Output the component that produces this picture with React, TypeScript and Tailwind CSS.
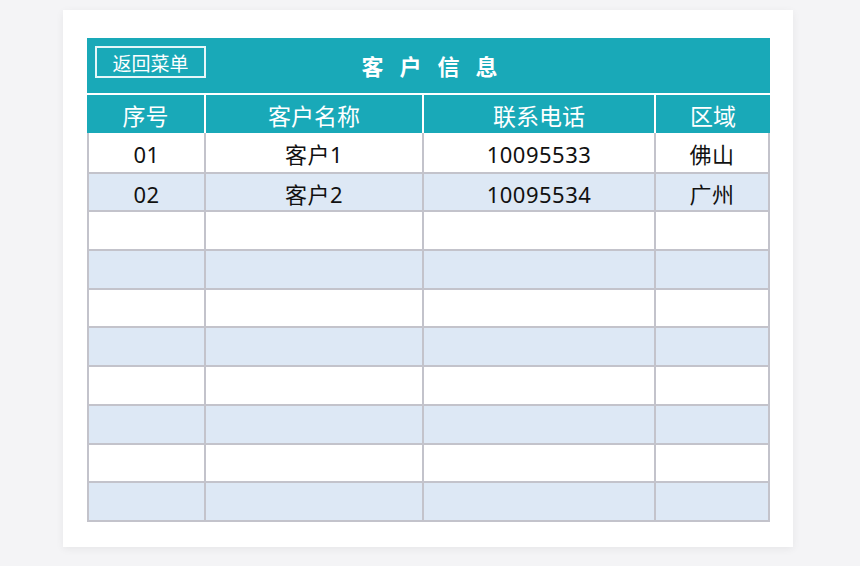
const columns = ['序号', '客户名称', '联系电话', '区域'];

const rows: string[][] = [
  ['01', '客户1', '10095533', '佛山'],
  ['02', '客户2', '10095534', '广州'],
  ['', '', '', ''],
  ['', '', '', ''],
  ['', '', '', ''],
  ['', '', '', ''],
  ['', '', '', ''],
  ['', '', '', ''],
  ['', '', '', ''],
  ['', '', '', ''],
];

const font = { fontFamily: '"Noto Sans", "Noto Sans CJK SC", sans-serif' };

function App() {
  return (
    <div className="h-[566px] w-[860px] bg-[#f4f4f6] pt-[10px] pl-[63px]" style={font}>
      <div className="h-[537px] w-[730px] bg-white pt-[28px] pl-[24px] shadow-[0_2px_8px_rgba(0,0,0,0.06)]">
        <div className="w-[683px]">
          {/* 标题栏 */}
          <div className="relative flex h-[55px] items-center justify-center bg-[#19a9b8]">
            <button className="absolute top-[8px] left-[8px] flex h-[32px] w-[111px] items-center justify-center border-2 border-[#e6f7f9] pt-[4px] text-[19px] leading-none text-white">
              返回菜单
            </button>
            <span className="pt-[2px] pl-[18px] text-[22px] font-bold tracking-[16px] text-white">客户信息</span>
          </div>

          <div className="grid grid-cols-[117px_218px_232px_116px] border-t-2 border-white bg-[#19a9b8]">
            {columns.map((c, i) => (
              <div
                key={c}
                className={`flex h-[38px] items-center justify-center pt-[4px] text-[23px] leading-none text-white ${
                  i > 0 ? 'border-l-2 border-white' : ''
                }`}
              >
                {c}
              </div>
            ))}
          </div>

          <div className="border-x-2 border-b-2 border-[#c3c3cb]">
            {rows.map((row, r) => (
              <div
                key={r}
                className={`grid h-[38.7px] grid-cols-[115px_218px_232px_114px] ${
                  r > 0 ? 'border-t-2 border-[#c3c3cb]' : ''
                } ${r % 2 === 1 ? 'bg-[#dde8f5]' : 'bg-white'}`}
              >
                {row.map((cell, i) => (
                  <div
                    key={i}
                    className={`flex items-center justify-center pt-[3px] text-[22px] leading-none tracking-[0.5px] text-[#111] ${
                      i > 0 ? 'border-l-2 border-[#c3c3cb]' : ''
                    }`}
                  >
                    {cell}
                  </div>
                ))}
              </div>
            ))}
          </div>
        </div>
      </div>
    </div>
  );
}

export default App;
